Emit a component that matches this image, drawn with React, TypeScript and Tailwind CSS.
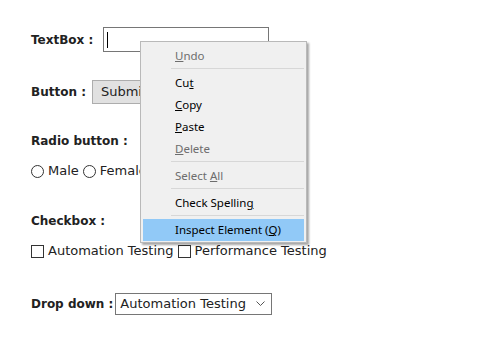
import React from 'react';

const labelFont = { fontFamily: '"Comic Sans MS", "DejaVu Sans", sans-serif' };

function Label({ children }: { children: React.ReactNode }) {
  return (
    <span className="text-[12px] font-bold text-[#222] whitespace-pre" style={labelFont}>
      {children}
    </span>
  );
}

function Radio() {
  return <span className="inline-block w-[13px] h-[13px] rounded-full border border-[#333] bg-white" />;
}

function Check() {
  return <span className="inline-block w-[13px] h-[13px] border border-[#333] bg-white" />;
}

function Item({ children, disabled, active }: { children: React.ReactNode; disabled?: boolean; active?: boolean }) {
  return (
    <div
      className={`h-[22px] flex items-center pl-[32px] text-[11.5px] ${disabled ? 'text-[#6d6d6d]' : 'text-black'} ${active ? 'bg-[#91c9f7]' : ''}`}
    >
      {children}
    </div>
  );
}

function Sep() {
  return (
    <div className="pt-[1px] pb-[3px] pl-[28px]">
      <div className="h-[1px] bg-[#d7d7d7]" />
    </div>
  );
}

function ContextMenu() {
  return (
    <div
      className="absolute left-[140px] top-[41px] w-[167px] bg-[#f0f0f0] border border-[#b9b9b9] px-[2px] pt-[3px] pb-[1px] shadow-[2px_2px_2px_rgba(0,0,0,0.35)]"
      style={{ fontFamily: '"Noto Sans", "Open Sans", sans-serif' }}
    >
      <Item disabled><span><u>U</u>ndo</span></Item>
      <Sep />
      <Item><span>Cu<u>t</u></span></Item>
      <Item><span><u>C</u>opy</span></Item>
      <Item><span><u>P</u>aste</span></Item>
      <Item disabled><span><u>D</u>elete</span></Item>
      <Sep />
      <Item disabled><span>Select <u>A</u>ll</span></Item>
      <Sep />
      <Item><span>Check Spellin<u>g</u></span></Item>
      <Sep />
      <Item active><span>Inspect Element (<u>Q</u>)</span></Item>
    </div>
  );
}

export default function App() {
  const body = { fontFamily: '"Comic Sans MS", "DejaVu Sans", sans-serif' };
  return (
    <div className="relative w-[488px] h-[339px] bg-white overflow-hidden">
      <div className="pl-[31px] pt-[27px] text-[13px] text-[#222]" style={body}>
        <div className="flex items-center h-[25px]">
          <Label>TextBox :</Label>
          <div className="ml-[10px] w-[166px] h-[25px] border border-[#767676] flex items-center pl-[3px]">
            <span className="w-[1px] h-[16px] bg-black" />
          </div>
        </div>

        <div className="flex items-center h-[24px] mt-[28px]">
          <Label>Button :</Label>
          <div className="ml-[6px] h-[24px] px-[8px] border border-[#adadad] bg-[#e1e1e1] flex items-center">
            Submit
          </div>
        </div>

        <div className="flex items-center h-[20px] mt-[27px]">
          <Label>Radio button :</Label>
        </div>

        <div className="flex items-center h-[20px] mt-[10px] gap-[4px]">
          <Radio />
          <span>Male</span>
          <Radio />
          <span>Female</span>
        </div>

        <div className="flex items-center h-[20px] mt-[30px]">
          <Label>Checkbox :</Label>
        </div>

        <div className="flex items-center h-[20px] mt-[10px] gap-[4px]">
          <Check />
          <span>Automation Testing</span>
          <Check />
          <span>Performance Testing</span>
        </div>

        <div className="flex items-center h-[22px] mt-[32px]">
          <Label>Drop down :</Label>
          <div className="ml-[2px] w-[157px] h-[22px] border border-[#767676] flex items-center pl-[4px] pr-[6px] justify-between">
            <span>Automation Testing</span>
            <svg width="9" height="6" viewBox="0 0 9 6" fill="none">
              <path d="M0.5 0.5 L4.5 4.5 L8.5 0.5" stroke="#555" strokeWidth="1" />
            </svg>
          </div>
        </div>
      </div>
      <ContextMenu />
    </div>
  );
}
